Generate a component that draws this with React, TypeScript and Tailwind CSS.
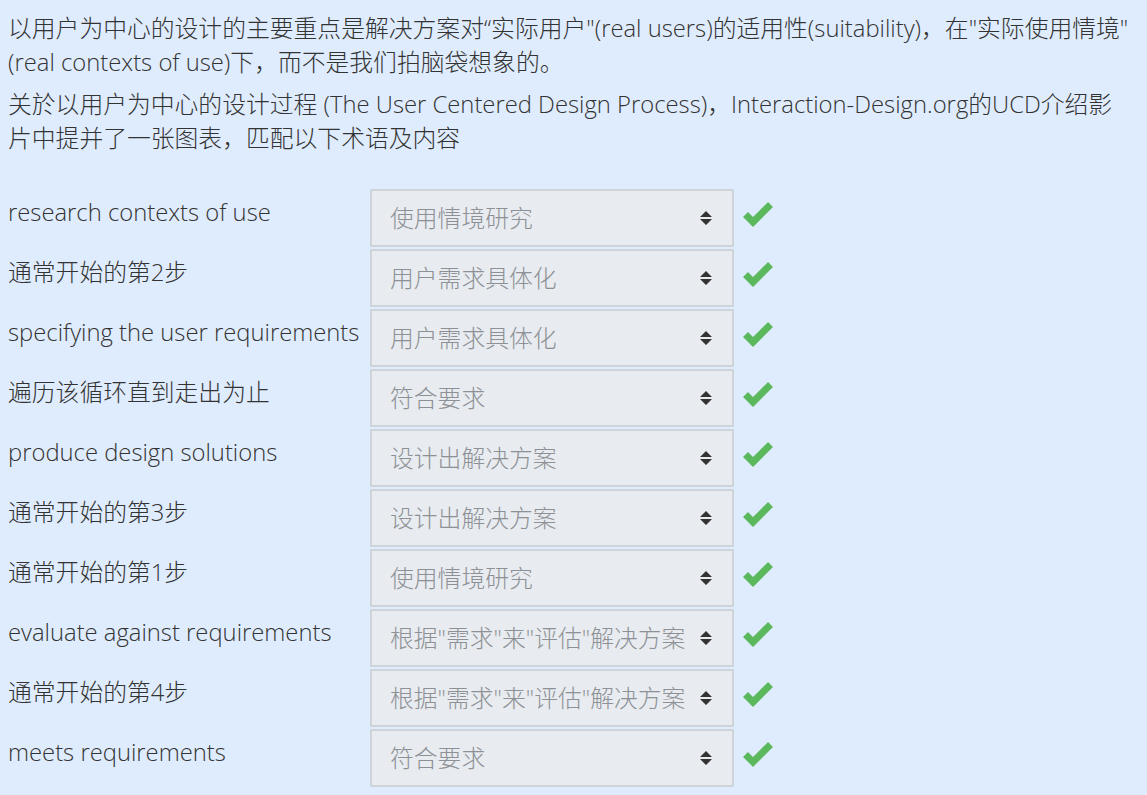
const rows: [string, string][] = [
  ['research contexts of use', '使用情境研究'],
  ['通常开始的第2步', '用户需求具体化'],
  ['specifying the user requirements', '用户需求具体化'],
  ['遍历该循环直到走出为止', '符合要求'],
  ['produce design solutions', '设计出解决方案'],
  ['通常开始的第3步', '设计出解决方案'],
  ['通常开始的第1步', '使用情境研究'],
  ['evaluate against requirements', '根据"需求"来"评估"解决方案'],
  ['通常开始的第4步', '根据"需求"来"评估"解决方案'],
  ['meets requirements', '符合要求'],
];

function SortIcon() {
  return (
    <svg width="12" height="14" viewBox="0 0 12 14" className="shrink-0">
      <path d="M6 0 L12 6 H0 Z M0 8 H12 L6 14 Z" fill="#333" />
    </svg>
  );
}

function Check() {
  return (
    <svg width="32" height="25" viewBox="0 0 32 25" className="shrink-0">
      <path d="M3.5 12.5 L11 20 L28.5 2.5" fill="none" stroke="#5cb85c" strokeWidth="7" strokeLinejoin="miter" />
    </svg>
  );
}

export default function App() {
  return (
    <div
      className="min-h-screen bg-[#dfecfd] px-2 pt-[11px] text-[23.8px] leading-[34px] font-light text-[#333]"
      style={{ fontFamily: '"Open Sans", "Noto Sans CJK SC", sans-serif' }}
    >
      <p className="mb-[8px]">
        以用户为中心的设计的主要重点是解决方案对“实际用户"(real users)的适用性(suitability)，在"实际使用情境"
        <br />
        (real contexts of use)下，而不是我们拍脑袋想象的。
      </p>
      <p>
        关於以用户为中心的设计过程 (The User Centered Design Process)，Interaction-Design.org的UCD介绍影
        <br />
        片中提并了一张图表，匹配以下术语及内容
      </p>

      <div className="mt-[34px] flex flex-col">
        {rows.map(([label, value], i) => (
          <div key={i} className="flex items-start">
            <div className="w-[362px] shrink-0 pt-[6px] whitespace-nowrap">{label}</div>
            <div className="mb-[2px] flex h-[58px] w-[364px] shrink-0 items-center justify-between border-2 border-[#ced4da] bg-[#e8ebef] pl-[18px] pr-[20px] text-[#8d9196]">
              <span className="whitespace-nowrap">{value}</span>
              <SortIcon />
            </div>
            <div className="ml-[8px] pt-[13px]">
              <Check />
            </div>
          </div>
        ))}
      </div>
    </div>
  );
}
